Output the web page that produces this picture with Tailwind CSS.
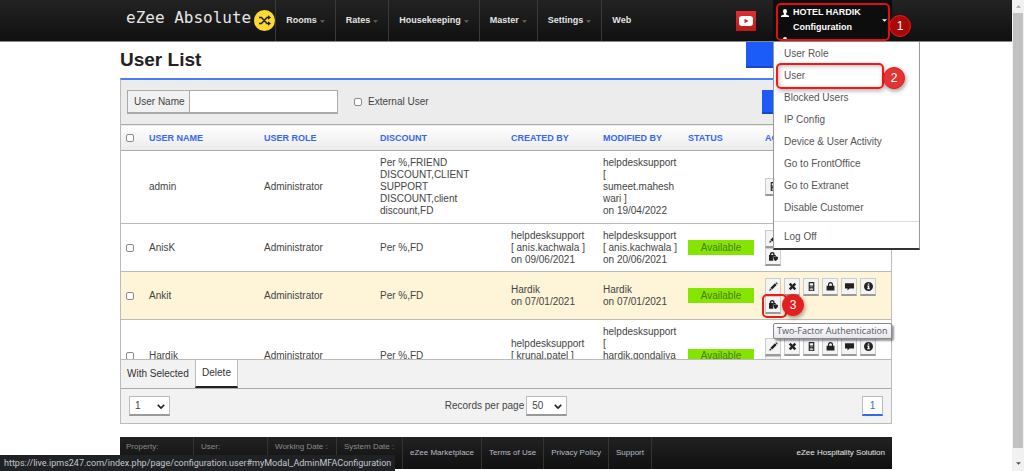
<!DOCTYPE html>
<html lang="en">
<head>
  <meta charset="UTF-8">
  <meta name="viewport" content="width=device-width, initial-scale=1.0">
  <title>eZee Absolute - User List</title>
  <script src="https://cdn.jsdelivr.net/npm/@tailwindcss/browser@4"></script>
</head>
<body class="flex h-screen overflow-hidden bg-white font-['Liberation_Sans',Arial,sans-serif] text-[10px] leading-3 text-[#444]">

  <!-- Icons -->
  <svg class="hidden" aria-hidden="true">
    <symbol id="i-edit" viewBox="0 0 16 16"><path d="M.5 15.500l1.200-4.200 3 3zM2.600 10.300l8-8 3 3-8 8zM11.500 1.500l.8-.8q.6-.5 1.200 0l1.800 1.800q.5.6 0 1.200l-.8.8z"/></symbol>
    <symbol id="i-close" viewBox="0 0 16 16"><path d="M1.500 4.500L4.500 1.500 8 5 11.500 1.500 14.500 4.500 11 8 14.500 11.500 11.500 14.500 8 11 4.500 14.500 1.500 11.500 5 8z"/></symbol>
    <symbol id="i-phone" viewBox="0 0 16 16"><path fill-rule="evenodd" d="M4 0h8q1 0 1 1v14q0 1-1 1H4q-1 0-1-1V1q0-1 1-1zM5 2v4h6V2zM5 8v1.500h1.500V8zM7.300 8v1.500h1.500V8zM9.600 8v1.500H11V8zM5 10.500V12h1.500v-1.500zM7.300 10.500V12h1.500v-1.500zM9.600 10.500V12H11v-1.500zM5 13v1.500h6V13z"/></symbol>
    <symbol id="i-lock" viewBox="0 0 16 16"><path fill-rule="evenodd" d="M1 6.500h2.500V5Q3.500 0 8 0t4.500 5v1.500H15V15H1zM5.500 6.500h5V5q0-2.800-2.500-2.800T5.500 5z"/></symbol>
    <symbol id="i-chat" viewBox="0 0 16 16"><path d="M0 2h16v9.500H8L4.500 15v-3.500H0z"/></symbol>
    <symbol id="i-info" viewBox="0 0 16 16"><path fill-rule="evenodd" d="M8 0a8 8 0 1 0 0 16A8 8 0 0 0 8 0zM6.800 2.500h2.600V5H6.800zM5.800 6.200h3.700v5h1v1.600H5.700v-1.600h1V7.800h-.9z"/></symbol>
    <symbol id="i-mfa" viewBox="0 0 16 16"><path fill-rule="evenodd" d="M0 5.500h1.500V5Q1.500 0 5.800 0T10 5v.5h2v2l-.8-.3L7 9v3q0 1.700 1 3.500H0zM4 5.500h3.600V5Q7.600 2.200 5.800 2.200T4 5z"/><path d="M11.800 7.500L16 9q.4 5-4.200 7-4.600-2-4.200-7z"/></symbol>
    <symbol id="i-user" viewBox="0 0 16 16"><path d="M8 0q4 0 4 4.500 0 3-2 4.800V11l6 2.500V16H0v-2.500L6 11V9.300Q4 7.500 4 4.500 4 0 8 0z"/></symbol>
    <symbol id="i-down" viewBox="0 0 10 6"><path d="M1 1l4 4 4-4" fill="none" stroke="#222" stroke-width="2"/></symbol>
  </svg>

  <div class="relative flex-1">
    <header class="relative z-20 h-[42px] border-b border-[#888] bg-linear-to-b from-[#232323] to-[#101010]">
      <div class="mx-auto flex h-full max-w-[772px]">
        <a href="#" class="flex items-center gap-[3px] pl-[6px] text-white">
          <span class="pb-[6px] font-['DejaVu_Sans_Mono',monospace] text-base leading-5 text-[#e6e6e6]">eZee Absolute</span>
          <svg class="size-[21px]" viewBox="0 0 21 21">
            <circle cx="10.500" cy="10.500" r="10.500" fill="#fdd835"/>
            <path d="M5 7.500h2.500l5.500 6h2M5 13.500h2.500L13 7.500h2" fill="none" stroke="#222" stroke-width="1.500"/>
            <path d="M14 5.300l3 2.200-3 2.200zM14 11.300l3 2.200-3 2.200z" fill="#222"/>
          </svg>
        </a>
        <nav class="flex text-[9px] font-bold text-[#e4e4e4]">
          <a href="#" class="flex items-center gap-[3px] border-l border-[#3a3a3a] px-[10px] pb-[2px]">Rooms <svg class="mt-1 h-[3px] w-[5px] fill-[#666]" viewBox="0 0 6 3"><path d="M0 0h6L3 3z"/></svg></a>
          <a href="#" class="flex items-center gap-[3px] border-l border-[#3a3a3a] px-[10px] pb-[2px]">Rates <svg class="mt-1 h-[3px] w-[5px] fill-[#666]" viewBox="0 0 6 3"><path d="M0 0h6L3 3z"/></svg></a>
          <a href="#" class="flex items-center gap-[3px] border-l border-[#3a3a3a] px-[10px] pb-[2px]">Housekeeping <svg class="mt-1 h-[3px] w-[5px] fill-[#666]" viewBox="0 0 6 3"><path d="M0 0h6L3 3z"/></svg></a>
          <a href="#" class="flex items-center gap-[3px] border-l border-[#3a3a3a] px-[10px] pb-[2px]">Master <svg class="mt-1 h-[3px] w-[5px] fill-[#666]" viewBox="0 0 6 3"><path d="M0 0h6L3 3z"/></svg></a>
          <a href="#" class="flex items-center gap-[3px] border-l border-[#3a3a3a] px-[10px] pb-[2px]">Settings <svg class="mt-1 h-[3px] w-[5px] fill-[#666]" viewBox="0 0 6 3"><path d="M0 0h6L3 3z"/></svg></a>
          <a href="#" class="flex items-center border-l border-[#3a3a3a] px-[10px] pb-[2px]">Web</a>
        </nav>
        <a href="#" aria-label="Videos" class="mr-[17px] ml-auto flex size-5 items-center justify-center self-center bg-linear-to-b from-[#e03030] to-[#b71c1c]">
          <svg class="h-[10px] w-[14px]" viewBox="0 0 14 10"><rect width="14" height="10" rx="3" fill="#fff"/><path d="M5.500 2.800v4.400L9.500 5z" fill="#c62828"/></svg>
        </a>
        <div class="relative w-[119px]">
          <button type="button" class="flex h-full w-full items-start gap-1 overflow-hidden bg-[#0d0d0d] pt-[5px] pl-2 text-left text-[9px] font-bold leading-[15px] text-white">
            <span class="flex flex-col gap-5 pt-1">
              <svg class="size-2 fill-white"><use href="#i-user"/></svg>
              <svg class="size-2 fill-white"><use href="#i-user"/></svg>
            </span>
            <span class="flex-1">HOTEL HARDIK<br>Configuration</span>
            <svg class="mt-[14px] mr-[5px] h-[3px] w-[5px] fill-white" viewBox="0 0 6 3"><path d="M0 0h6L3 3z"/></svg>
          </button>
          <ul class="absolute top-[42px] left-0 w-[147px] border-x border-b-2 border-x-[#999] border-b-[#333] bg-white pt-px text-[10px] text-[#555] *:flex *:h-[22px] *:items-center *:pl-[10px]">
            <li><a href="#">User Role</a></li>
            <li><a href="#">User</a></li>
            <li><a href="#">Blocked Users</a></li>
            <li><a href="#">IP Config</a></li>
            <li><a href="#">Device &amp; User Activity</a></li>
            <li><a href="#">Go to FrontOffice</a></li>
            <li><a href="#">Go to Extranet</a></li>
            <li><a href="#">Disable Customer</a></li>
            <li class="mt-[2px] box-content border-t border-[#ddd] pt-1"><a href="#">Log Off</a></li>
          </ul>
        </div>
      </div>
    </header>

    <main class="mx-auto max-w-[772px]">
      <div class="flex h-9 items-start justify-between">
        <h1 class="pt-[7px] text-[19px] font-bold leading-[22px] text-[#222]">User List</h1>
        <button type="button" aria-label="Add User" class="h-[26px] w-[146px] border-b-2 border-[#1648c8] bg-[#1b5cf8]"></button>
      </div>

      <section class="border border-t-2 border-[#bbb] border-t-[#4a7df5]">
        <div class="flex h-[44px] items-center bg-[#ececec] px-[6px]">
          <div class="flex h-6 w-[211px] border border-b-2 border-[#aaa]">
            <label for="username" class="flex w-[62px] items-center border-r border-[#aaa] bg-[#f1f1f1] pl-[6px]">User Name</label>
            <input id="username" type="text" class="min-w-0 flex-1 bg-white px-2 outline-none">
          </div>
          <label class="ml-4 flex items-center gap-[6px]">
            <input type="checkbox" class="size-[8px] appearance-none rounded-[2px] border border-[#888] bg-white">
            External User
          </label>
          <button type="button" aria-label="Search" class="ml-auto h-6 w-[123px] border-b-2 border-[#1648c8] bg-[#1b5cf8]"></button>
        </div>

        <div class="h-[235px] overflow-hidden">
          <table class="w-full table-fixed border-collapse text-left">
            <colgroup>
              <col class="w-[28px]"><col class="w-[115px]"><col class="w-[116px]"><col class="w-[131px]">
              <col class="w-[92px]"><col class="w-[85px]"><col class="w-[77px]"><col>
            </colgroup>
            <thead>
              <tr class="h-[26px] border-y border-[#aaa] bg-linear-to-b from-white to-[#ebebeb] text-[9px] text-[#3767f0]">
                <th class="pl-[5px]"><input type="checkbox" aria-label="Select all" class="block size-[8px] appearance-none rounded-[2px] border border-[#888] bg-white"></th>
                <th>USER NAME</th>
                <th>USER ROLE</th>
                <th>DISCOUNT</th>
                <th>CREATED BY</th>
                <th>MODIFIED BY</th>
                <th>STATUS</th>
                <th>ACTION</th>
              </tr>
            </thead>
            <tbody id="users"></tbody>
          </table>
        </div>

        <div class="flex h-[29px] border-t border-[#bbb] bg-[#f2f2f2] text-[#333]">
          <span class="flex w-[74px] items-center pl-[6px]">With Selected</span>
          <button type="button" class="w-[43px] border-x border-b-2 border-x-[#bbb] border-b-[#222] bg-white">Delete</button>
        </div>
        <div class="grid h-[35px] grid-cols-[1fr_auto_1fr] items-center border-t border-[#aaa] bg-[#f2f2f2] px-2">
          <div class="relative w-[41px]">
            <select aria-label="Page" class="block h-5 w-full appearance-none border border-b-2 border-[#bbb] border-b-[#999] bg-white pl-[5px] text-[10px]"><option>1</option></select>
            <svg class="pointer-events-none absolute top-2 right-[5px] h-[5px] w-[8px]"><use href="#i-down"/></svg>
          </div>
          <div class="flex items-center gap-[2px]">
            <label for="perpage">Records per page</label>
            <div class="relative w-[41px]">
              <select id="perpage" class="block h-5 w-full appearance-none border border-b-2 border-[#bbb] border-b-[#999] bg-white pl-[5px] text-[10px]"><option>50</option></select>
              <svg class="pointer-events-none absolute top-2 right-[5px] h-[5px] w-[8px]"><use href="#i-down"/></svg>
            </div>
          </div>
          <button type="button" class="h-5 w-[21px] justify-self-end border border-b-2 border-[#bbb] border-b-[#3767f0] bg-white text-[#3767f0]">1</button>
        </div>
      </section>

      <footer class="mt-[13px] flex h-8 bg-linear-to-b from-[#222] to-[#101010] text-[8px] text-[#8a8a8a]">
        <div class="w-[74px] border-r border-[#333] pt-1 pl-[6px]">Property:</div>
        <div class="w-[74px] border-r border-[#333] pt-1 pl-[7px]">User:</div>
        <div class="w-[69px] border-r border-[#333] pt-1 pl-[7px]">Working Date :</div>
        <div class="w-[66px] border-r border-[#333] pt-1 pl-[7px]">System Date :</div>
        <a href="#" class="flex items-center border-r border-[#333] px-[7px] text-[#b8bcc8]">eZee Marketplace</a>
        <a href="#" class="flex items-center border-r border-[#333] px-[7px] text-[#b8bcc8]">Terms of Use</a>
        <a href="#" class="flex items-center border-r border-[#333] px-[7px] text-[#b8bcc8]">Privacy Policy</a>
        <a href="#" class="flex items-center border-r border-[#333] px-[7px] text-[#b8bcc8]">Support</a>
        <span class="ml-auto flex items-center pr-[7px] text-[#e8e8e8]">eZee Hospitality Solution</span>
      </footer>
    </main>

    <!-- Step markers -->
    <div class="absolute top-[3px] left-[776px] z-30 h-[38px] w-[114px] rounded-[5px] border-2 border-[#e01010]"></div>
    <div class="absolute top-[15px] left-[889px] z-30 flex size-[22px] items-center justify-center rounded-full border border-[#f01818] bg-[#a80808] text-xs text-white">1</div>
    <div class="absolute top-[63px] left-[776px] z-30 h-[26px] w-[108px] rounded-[5px] border-2 border-[#f01818] shadow-[1px_2px_4px_rgba(0,0,0,0.3),inset_1px_1px_4px_rgba(0,0,0,0.3)]"></div>
    <div class="absolute top-[67px] left-[883px] z-30 flex size-[22px] items-center justify-center rounded-full border border-[#f01818] bg-[#e23434] text-xs text-white shadow-[1px_2px_4px_rgba(0,0,0,0.4)]">2</div>
    <div class="absolute top-[294px] left-[762px] z-30 h-[24px] w-[25px] rounded-[5px] border-2 border-[#f01818]"></div>
    <div class="absolute top-[294px] left-[782px] z-30 flex size-[22px] items-center justify-center rounded-full border border-[#f01818] bg-[#e22020] text-xs text-white shadow-[1px_2px_4px_rgba(0,0,0,0.4)]">3</div>
    <div role="tooltip" class="absolute top-[323px] left-[773px] z-30 flex h-4 items-center rounded-[2px] border border-[#888] bg-linear-to-b from-white to-[#e6e6f0] px-[3px] font-['Open_Sans',sans-serif] text-[9px] whitespace-nowrap text-[#555] shadow-[2px_2px_2px_rgba(0,0,0,0.4)]">Two-Factor Authentication</div>
    <div class="absolute bottom-0 left-0 z-30 flex h-4 items-center rounded-tr-[3px] bg-[#202124] px-1 font-[Roboto,sans-serif] text-[9px] whitespace-nowrap text-[#c4c8cd]">https://live.ipms247.com/index.php/page/configuration.user#myModal_AdminMFAConfiguration</div>
  </div>

  <!-- Scrollbar -->
  <div class="flex w-3 flex-col items-center bg-[#f1f1f1]">
    <svg class="my-[5px] h-[3px] w-[5px] shrink-0 fill-[#a3a3a3]" viewBox="0 0 6 3"><path d="M0 3h6L3 0z"/></svg>
    <div class="w-[10px] flex-1 bg-[#c1c1c1]"></div>
    <svg class="mt-[14px] mb-[6px] h-[3px] w-[5px] shrink-0 fill-[#505050]" viewBox="0 0 6 3"><path d="M0 0h6L3 3z"/></svg>
  </div>

  <script>
    const labels = { edit: 'Edit', close: 'Delete', phone: 'Mobile', lock: 'Change Password', chat: 'Message', info: 'Information', mfa: 'Two-Factor Authentication' };
    const all = ['edit', 'close', 'phone', 'lock', 'chat', 'info', 'mfa'];
    const users = [
      { name: 'admin', discount: 'Per %,FRIEND<br>DISCOUNT,CLIENT<br>SUPPORT<br>DISCOUNT,client<br>discount,FD', created: '', modified: 'helpdesksupport<br>[<br>sumeet.mahesh<br>wari ]<br>on 19/04/2022', actions: ['phone'], height: 'h-[73px]' },
      { name: 'AnisK', discount: 'Per %,FD', created: 'helpdesksupport<br>[ anis.kachwala ]<br>on 09/06/2021', modified: 'helpdesksupport<br>[ anis.kachwala ]<br>on 20/06/2021', actions: all, available: true, height: 'h-[48px]' },
      { name: 'Ankit', discount: 'Per %,FD', created: 'Hardik<br>on 07/01/2021', modified: 'Hardik<br>on 07/01/2021', actions: all, available: true, height: 'h-[48px] bg-[#fef4d8]' },
      { name: 'Hardik', discount: 'Per %,FD', created: 'helpdesksupport<br>[ krunal.patel ]<br>on 07/01/2021', modified: 'helpdesksupport<br>[<br>hardik.gondaliya<br>]<br>on 07/01/2021', actions: all, available: true, height: 'h-[73px]' }
    ];

    document.getElementById('users').innerHTML = users.map(user => `
      <tr class="border-b border-[#bbb] ${user.height}">
        <td class="pl-[5px]">${user.available ? `<input type="checkbox" aria-label="Select ${user.name}" class="block size-[8px] appearance-none rounded-[2px] border border-[#888] bg-white">` : ''}</td>
        <td>${user.name}</td>
        <td>Administrator</td>
        <td>${user.discount}</td>
        <td>${user.created}</td>
        <td>${user.modified}</td>
        <td>${user.available ? '<span class="flex h-[15px] w-[66px] items-center justify-center bg-[#84e600] text-[#4c7c12]">Available</span>' : ''}</td>
        <td>
          <div class="flex flex-wrap gap-x-[3px]">
            ${user.actions.map(action => `
              <button type="button" aria-label="${labels[action]}" class="flex h-[18px] w-4 items-center justify-center border border-b-2 border-[#ccc] border-b-[#999] bg-[#f4f4f4]">
                <svg class="size-[9px] fill-[#222]"><use href="#i-${action}"/></svg>
              </button>`).join('')}
          </div>
        </td>
      </tr>
    `).join('');
  </script>
</body>
</html>
